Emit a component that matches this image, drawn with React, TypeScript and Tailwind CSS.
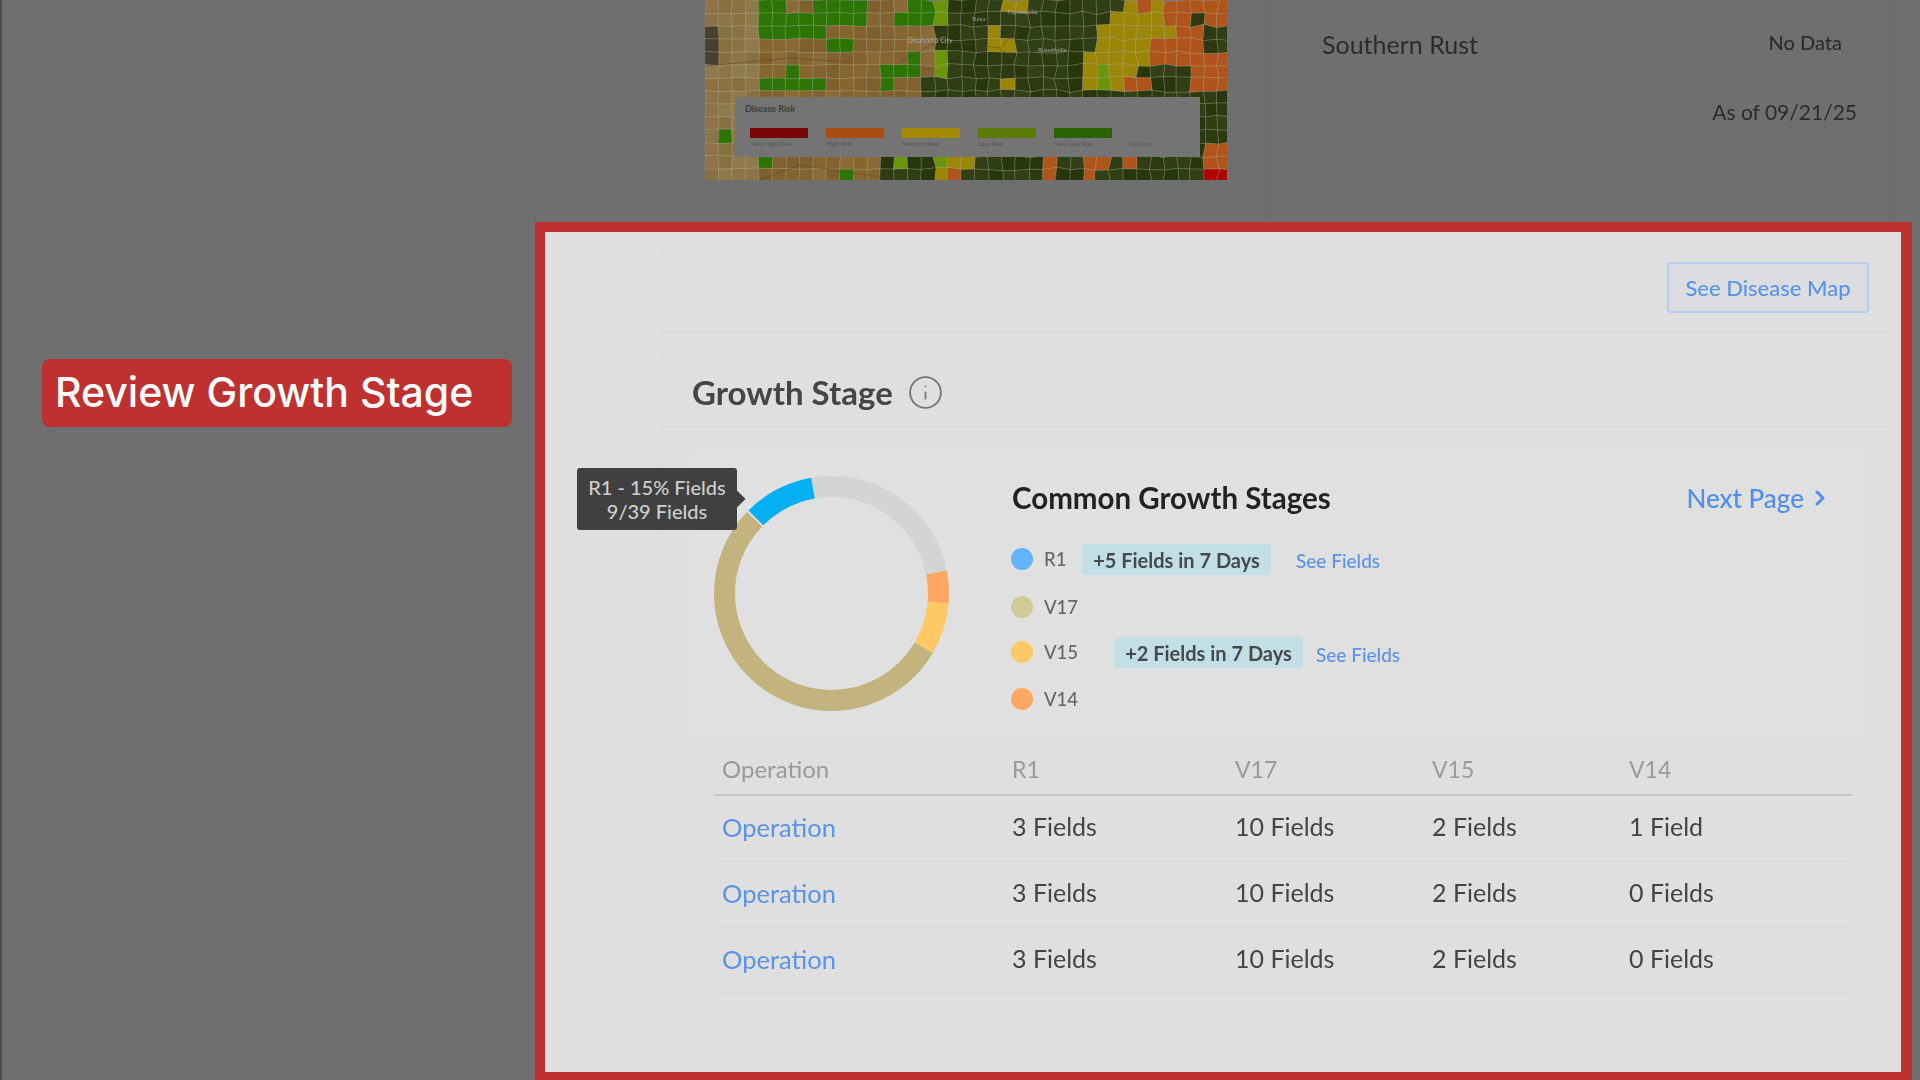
import React from "react";
import { ChevronRight, Info } from "lucide-react";

type R = [number, number, number, number, string];
const G = "#2c7505";
const L = "#6a940a";
const Y = "#9c8608";
const O = "#b0541b";
const regions: R[] = [
  [753, 0, 780, 38, G], [780, 14, 863, 30, G], [780, 30, 833, 44, G], [808, 0, 863, 13, G], [820, 45, 848, 58, G],
  [780, 60, 803, 73, G], [760, 75, 823, 87, G], [755, 88, 833, 97, G], [728, 97, 737, 130, G], [717, 130, 730, 147, G],
  [762, 158, 778, 164, G], [840, 175, 857, 180, G], [903, 0, 932, 13, G], [893, 15, 933, 25, G], [902, 47, 927, 73, G],
  [882, 62, 917, 83, G], [887, 80, 900, 97, G],
  [933, 0, 953, 25, L], [928, 57, 948, 82, L], [960, 93, 972, 97, L], [897, 160, 913, 173, L], [930, 160, 950, 173, L],
  [950, 158, 970, 170, Y], [933, 172, 950, 180, Y], [950, 173, 963, 180, O],
  [1002, 0, 1028, 7, Y], [982, 27, 998, 45, Y], [995, 40, 1017, 53, Y], [998, 82, 1017, 97, Y],
  [1125, 0, 1162, 13, Y], [1108, 13, 1175, 27, Y], [1098, 27, 1172, 33, Y], [1092, 33, 1165, 50, Y], [1082, 50, 1148, 67, Y], [1078, 67, 1132, 97, Y],
  [1102, 67, 1112, 87, L],
  [1135, 0, 1148, 8, O], [1165, 0, 1228, 20, O], [1196, 10, 1208, 20, "#2d3a10"], [1178, 20, 1198, 47, O], [1155, 40, 1190, 50, O],
  [1152, 50, 1228, 65, O], [1192, 65, 1228, 88, O], [1128, 73, 1148, 97, O], [1210, 137, 1227, 163, O],
  [1045, 158, 1062, 180, O], [1077, 158, 1115, 172, O], [1085, 172, 1098, 180, O], [1122, 158, 1135, 163, O],
  [1208, 172, 1226, 180, "#b00000"],
];
const tans = ["#86662f", "#7f5f2c", "#8a6a36", "#82622e"];
const darks = ["#2d3a10", "#303e14", "#28360c", "#333f14"];
const hash = (a: number, b: number) => {
  const s = Math.sin(a * 127.1 + b * 311.7) * 43758.5453;
  return s - Math.floor(s);
};
const colorAt = (x: number, y: number, i: number, j: number) => {
  let c = "";
  for (const r of regions) if (x >= r[0] && x < r[2] && y >= r[1] && y < r[3]) c = r[4];
  if (c) return c;
  const limit = 935 - (y > 60 ? (y - 60) * 0.5 : 0);
  const k = Math.floor(hash(i, j) * 4);
  if (x < limit) {
    if (x < 725 && y > 20 && y < 60) return "#4a3f2c";
    if (x < 760) return ["#8c7447", "#86703f", "#907a4c", "#8a7243"][k];
    return tans[k];
  }
  return darks[k];
};
const cw = 13.5;
const ch = 13;
const vertex = (i: number, j: number) => {
  const x0 = 705 + i * cw;
  const amp = x0 < 930 ? 0.8 : 1.8;
  return [x0 + (i === 0 ? 0 : (hash(i, j + 3) - 0.5) * amp * 2), j * ch + (hash(i + 7, j) - 0.5) * amp * 2];
};
const cells: { pts: string; fill: string }[] = [];
for (let j = 0; j < 14; j++) {
  for (let i = 0; i < 39; i++) {
    const v = [vertex(i, j), vertex(i + 1, j), vertex(i + 1, j + 1), vertex(i, j + 1)];
    cells.push({
      pts: v.map((p) => p[0].toFixed(1) + "," + p[1].toFixed(1)).join(" "),
      fill: colorAt(705 + (i + 0.5) * cw, (j + 0.5) * ch, i, j),
    });
  }
}

const legend = [
  { c: "bg-[#7a0707]", t: "Very High Risk", w: "ml-[15px]" },
  { c: "bg-[#a94d13]", t: "High Risk", w: "ml-[18px]" },
  { c: "bg-[#a28a05]", t: "Medium Risk", w: "ml-[18px]" },
  { c: "bg-[#5c7a05]", t: "Low Risk", w: "ml-[18px]" },
  { c: "bg-[#2a6200]", t: "Very Low Risk", w: "ml-[18px]" },
  { c: "bg-[#737373]", t: "No Data", w: "ml-[17px]" },
];

function MapPanel() {
  return (
    <div className="relative w-[522px] h-[180px] shrink-0 overflow-hidden blur-[0.6px]">
      <svg viewBox="705 0 522 180" width="522" height="180" className="block">
        {cells.map((c, i) => (
          <polygon key={i} points={c.pts} fill={c.fill} stroke="#c8c8b4" strokeOpacity="0.26" strokeWidth="0.8" />
        ))}
        <path d="M705 66 L790 58 L850 62 M900 62 L940 40 L1000 48 M1030 10 L1000 50 L1070 90 M900 180 L800 165 L760 180" fill="none" stroke="#5a4630" strokeOpacity="0.5" strokeWidth="1" />
        <text x="907" y="43" fontSize="7" fill="#a0a0a0" fontFamily="Lato, sans-serif">Oklahoma City</text>
        <text x="1008" y="14" fontSize="6" fill="#a0a0a0" fontFamily="Lato, sans-serif">Fayetteville</text>
        <text x="1038" y="52" fontSize="6" fill="#a0a0a0" fontFamily="Lato, sans-serif">Russellville</text>
        <text x="972" y="21" fontSize="6" fill="#a0a0a0" fontFamily="Lato, sans-serif">Tulsa</text>
      </svg>
      <div className="absolute left-[30px] top-[97px] w-[465px] h-[60px] bg-[#747474] pl-[10px] pt-[6px]">
        <div className="text-[9px] leading-[11px] text-[#3c3c3c] font-bold">Disease Risk</div>
        <div className="flex mt-[14px] -ml-[10px]">
          {legend.map((l) => (
            <div key={l.t} className={`w-[58px] shrink-0 ${l.w}`}>
              <div className={`h-[10px] ${l.c}`} />
              <div className="text-[6.5px] leading-[10px] mt-[1px] text-[#555555] whitespace-nowrap">{l.t}</div>
            </div>
          ))}
        </div>
      </div>
    </div>
  );
}

const arcs = [
  { s: 350, l: 88.7, c: "#d4d4d4" },
  { s: 78.7, l: 16.3, c: "#fea664" },
  { s: 95, l: 25.5, c: "#fec864" },
  { s: 120.5, l: 193.5, c: "#c2b37f" },
  { s: 315, l: 35, c: "#05b0f2" },
];

function Donut() {
  return (
    <svg width="235" height="235" viewBox="0 0 235 235" className="block shrink-0">
      {arcs.map((a) => (
        <circle
          key={a.s}
          cx="117.5"
          cy="117.5"
          r="107"
          fill="none"
          stroke={a.c}
          strokeWidth="21"
          pathLength={360}
          strokeDasharray={`${a.l} ${360 - a.l}`}
          strokeDashoffset={-a.s}
          transform="rotate(-90 117.5 117.5)"
        />
      ))}
    </svg>
  );
}

const Dot = ({ c }: { c: string }) => <span className={`-ml-[1px] w-[22px] h-[22px] rounded-full shrink-0 ${c}`} />;
const Badge = ({ t }: { t: string }) => (
  <span className="w-[189px] h-[31px] rounded-[3px] bg-[#c2dfe6] text-[20px] leading-[33px] font-bold text-[#454b4d] text-center whitespace-nowrap shrink-0">{t}</span>
);
const SeeFields = ({ extra }: { extra: string }) => (
  <span className={`text-[19px] leading-[24px] font-medium text-[#5b93e8] whitespace-nowrap ${extra}`}>See Fields</span>
);
const Stage = ({ t, w }: { t: string; w: string }) => (
  <span className={`ml-[11px] text-[18.5px] leading-[24px] text-[#666666] font-medium ${w}`}>{t}</span>
);

const cols = "grid grid-cols-[298px_223px_197px_197px_1fr] items-center pb-[2px]";
const rows = [
  ["3 Fields", "10 Fields", "2 Fields", "1 Field"],
  ["3 Fields", "10 Fields", "2 Fields", "0 Fields"],
  ["3 Fields", "10 Fields", "2 Fields", "0 Fields"],
];

export default function App() {
  return (
    <div className="w-[1920px] h-[1080px] overflow-hidden bg-[#6f6f6f] border-l-2 border-[#4c4c4c] flex flex-col font-['Lato','Liberation_Sans',sans-serif]">
      <div className="h-[222px] flex shrink-0 blur-[0.7px]">
        <div className="pl-[703px] shrink-0">
          <MapPanel />
        </div>
        <div className="ml-[43px] w-[623px] border-l border-[#6a6a6a] border-r pl-[51px] pr-[35px] text-[#2c2c2c]">
          <div className="flex justify-between pt-[28px]">
            <span className="text-[25px] leading-[32px]">Southern Rust</span>
            <span className="text-[20px] leading-[28px] font-medium mr-[15px]">No Data</span>
          </div>
          <div className="text-right text-[21px] leading-[28px] mt-[38px]">As of 09/21/25</div>
        </div>
      </div>

      <div className="flex h-[858px] shrink-0">
        <div className="w-[533px] pl-[40px] pt-[137px] shrink-0">
          <div className="w-[470px] h-[68px] rounded-[8px] bg-[#bf3131] pl-[13px] text-white text-[41px] leading-[66px] font-medium font-['Inter',sans-serif] whitespace-nowrap">
            Review Growth Stage
          </div>
        </div>
        <div className="w-[1377px] border-t-[10px] border-l-[10px] border-r-[11px] border-b-[8px] border-[#bf3131] bg-[#dfdfdf] overflow-hidden shrink-0">
          <div className="h-full pl-[116px] pr-[8px] blur-[0.7px]">
            <div className="h-full border-l border-[#dadada] pt-[17px]">
              <div className="h-[84px] border-y-2 border-[#dbdbdb] flex items-start justify-end pr-[24px] pt-[11px]">
                <span className="w-[202px] h-[51px] border-2 border-[#b7cff2] rounded-[3px] bg-[#dcdde1] text-center text-[22px] leading-[47px] text-[#5b93e8] font-medium">
                  See Disease Map
                </span>
              </div>
              <div className="mt-[24px] h-[71px] border-y-2 border-[#dbdbdb] flex items-center pl-[30px]">
                <span className="text-[33px] leading-[40px] -mt-[2px] font-bold text-[#454545]">Growth Stage</span>
                <Info className="ml-[14px] -mt-[1px] text-[#767676]" size={37} strokeWidth={1.2} />
              </div>

              <div className="relative ml-[29px] mr-[28px] mt-[21px] h-[287px] bg-[#e0e0e0] pt-[27px] pl-[23px] pr-[33px] flex">
                <Donut />
                <div className="ml-[63px] pt-[2px] flex-1">
                  <div className="flex items-center justify-between h-[40px]">
                    <span className="text-[29.5px] leading-[40px] font-bold text-[#222222]">Common Growth Stages</span>
                    <span className="flex items-center text-[26px] leading-[40px] font-medium text-[#4d8ef0]">
                      Next Page
                      <ChevronRight className="ml-[4px]" size={24} strokeWidth={3} />
                    </span>
                  </div>
                  <div className="mt-[26px] h-[30px] flex items-center">
                    <Dot c="bg-[#5fb4fb]" />
                    <Stage t="R1" w="w-[38px]" />
                    <Badge t="+5 Fields in 7 Days" />
                    <SeeFields extra="ml-[25px] mt-[3px]" />
                  </div>
                  <div className="mt-[18px] h-[30px] flex items-center">
                    <Dot c="bg-[#cfca97]" />
                    <Stage t="V17" w="w-[38px]" />
                  </div>
                  <div className="mt-[15px] h-[30px] flex items-center">
                    <Dot c="bg-[#fec864]" />
                    <Stage t="V15" w="w-[70px]" />
                    <Badge t="+2 Fields in 7 Days" />
                    <SeeFields extra="ml-[13px] mt-[6px]" />
                  </div>
                  <div className="mt-[17px] h-[30px] flex items-center">
                    <Dot c="bg-[#fea664]" />
                    <Stage t="V14" w="w-[38px]" />
                  </div>
                </div>
                <div className="absolute left-[-114px] top-[19px] w-[160px] h-[62px] rounded-[3px] bg-[#404040] text-[#cfcfcf] text-[20px] leading-[24px] font-medium text-center pt-[7px]">
                  <div>R1 - 15% Fields</div>
                  <div>9/39 Fields</div>
                  <span className="absolute right-[-6px] top-[25px] w-[12px] h-[12px] rotate-45 bg-[#404040]" />
                </div>
              </div>

              <div className="ml-[52px] mr-[41px] mt-[10px] text-[25px]">
                <div className={`${cols} h-[50px] border-b-2 border-[#c9c9c9] text-[#9a9a9a]`}>
                  <span className="pl-[8px] text-[24px]">Operation</span>
                  <span className="text-[23px]">R1</span>
                  <span className="text-[23px]">V17</span>
                  <span className="text-[23px]">V15</span>
                  <span className="text-[23px]">V14</span>
                </div>
                {rows.map((r, i) => (
                  <div key={i} className={`${cols} h-[66px] border-b-2 border-[#dbdbdb] text-[#444444]`}>
                    <span className="pl-[8px] text-[#5b93e8] text-[25.5px]">Operation</span>
                    {r.map((c, k) => (
                      <span key={k}>{c}</span>
                    ))}
                  </div>
                ))}
              </div>
            </div>
          </div>
        </div>
      </div>
    </div>
  );
}
